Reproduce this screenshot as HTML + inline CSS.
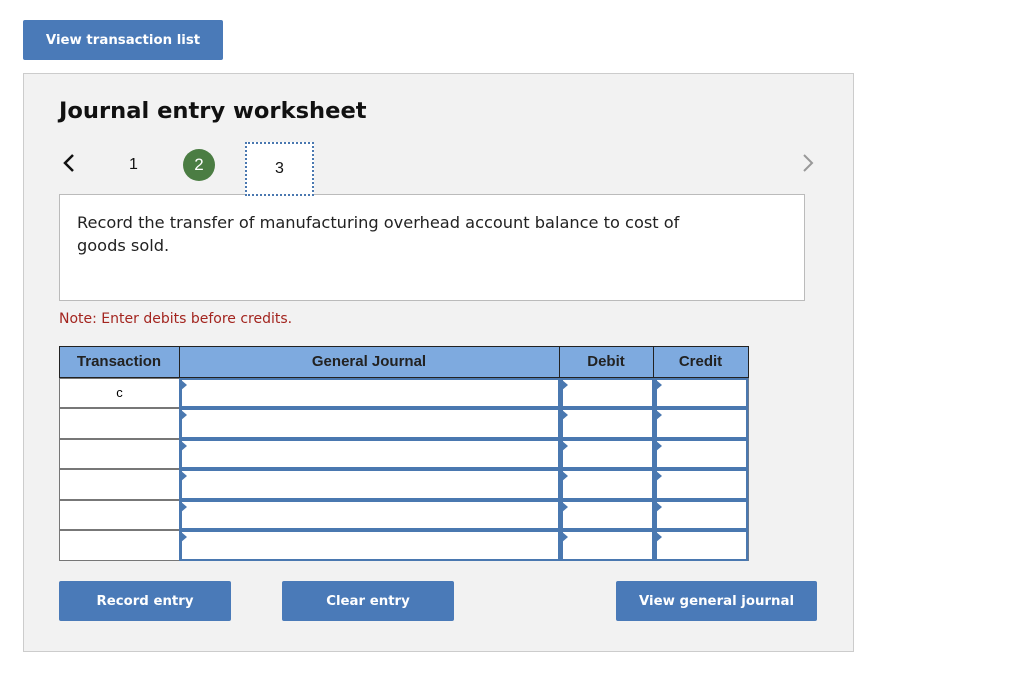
<!DOCTYPE html>
<html><head><meta charset="utf-8"><style>
*{box-sizing:border-box;margin:0;padding:0}
body{width:1024px;height:687px;background:#fff;font-family:"Liberation Sans",sans-serif;position:relative;overflow:hidden}
.btn{position:absolute;background:#4a7ab8;color:#fff;font-weight:bold;font-size:13.3px;font-family:"DejaVu Sans",sans-serif;display:flex;align-items:center;justify-content:center;border-radius:2px}
.panel{position:absolute;left:23px;top:73px;width:831px;height:579px;background:#f2f2f2;border:1px solid #ccc}
.abs{position:absolute}
.cell{position:absolute;background:#fff;border:1px solid #777}
.inp{position:absolute;background:#fff;border:2px solid #4a78b0;border-left-width:3px}
.inp:before{content:"";position:absolute;left:-2px;top:-1px;border-left:7px solid #4a78b0;border-top:6px solid transparent;border-bottom:6px solid transparent}
</style></head><body>
<div class="btn" style="left:23px;top:20px;width:200px;height:40px">View transaction list</div>
<div class="panel"></div>
<div class="abs" style="left:59px;top:98px;font-size:22.6px;font-weight:bold;color:#111;font-family:'DejaVu Sans',sans-serif">Journal entry worksheet</div>
<svg class="abs" style="left:60px;top:152px" width="20" height="22"><path d="M13 3 L5 11 L13 19" fill="none" stroke="#111" stroke-width="2.5"/></svg>
<div class="abs" style="left:129px;top:156px;font-size:16px;color:#111">1</div>
<div class="abs" style="left:183px;top:149px;width:32px;height:32px;border-radius:50%;background:#4b7d43;color:#fff;font-size:17px;display:flex;align-items:center;justify-content:center">2</div>
<svg class="abs" style="left:798px;top:152px" width="20" height="22"><path d="M6 3 L14 11 L6 19" fill="none" stroke="#999" stroke-width="2"/></svg>
<div class="abs" style="left:59px;top:194px;width:746px;height:107px;background:#fff;border:1px solid #bbb;padding:16px 17px;font-size:16.2px;line-height:23px;color:#222;font-family:'DejaVu Sans',sans-serif">Record the transfer of manufacturing overhead account balance to cost of<br>goods sold.</div>
<div class="abs" style="left:245px;top:142px;width:69px;height:54px;background:#fff;border:2px dotted #4a78b0;font-size:16px;color:#111;display:flex;align-items:center;justify-content:center">3</div>
<div class="abs" style="left:59px;top:311px;font-size:14px;color:#a3251f;font-family:'DejaVu Sans',sans-serif">Note: Enter debits before credits.</div>
<div class="abs" style="left:59px;top:346px;width:690px;height:215px;background:#6a7a90"></div>
<div class="abs" style="left:59px;top:346px;width:690px;height:32px;background:#7eaadf;border:1px solid #222"></div>
<div class="abs" style="left:179px;top:346px;width:1px;height:32px;background:#222"></div>
<div class="abs" style="left:559px;top:346px;width:1px;height:32px;background:#222"></div>
<div class="abs" style="left:653px;top:346px;width:1px;height:32px;background:#222"></div>
<div class="abs" style="left:59px;top:353px;width:120px;text-align:center;font-weight:bold;font-size:15px;color:#222">Transaction</div>
<div class="abs" style="left:179px;top:353px;width:380px;text-align:center;font-weight:bold;font-size:15px;color:#222">General Journal</div>
<div class="abs" style="left:559px;top:353px;width:94px;text-align:center;font-weight:bold;font-size:15px;color:#222">Debit</div>
<div class="abs" style="left:653px;top:353px;width:95px;text-align:center;font-weight:bold;font-size:15px;color:#222">Credit</div>
<div id="rows"></div>
<script>
var ys=[378,408,439,469,500,530],h=[30,31,30,31,30,31],s='';
for(var i=0;i<6;i++){var y=ys[i],hh=h[i];
s+='<div class="cell" style="left:59px;top:'+y+'px;width:121px;height:'+hh+'px;text-align:center;font-size:13px;line-height:'+(hh-2)+'px">'+(i==0?'c':'')+'</div>';
s+='<div class="inp" style="left:179px;top:'+y+'px;width:381px;height:'+hh+'px"></div>';
s+='<div class="inp" style="left:560px;top:'+y+'px;width:94px;height:'+hh+'px"></div>';
s+='<div class="inp" style="left:654px;top:'+y+'px;width:94px;height:'+hh+'px"></div>';}
document.getElementById('rows').innerHTML=s;
</script>
<div class="btn" style="left:59px;top:581px;width:172px;height:40px">Record entry</div>
<div class="btn" style="left:282px;top:581px;width:172px;height:40px">Clear entry</div>
<div class="btn" style="left:616px;top:581px;width:201px;height:40px">View general journal</div>
</body></html>
